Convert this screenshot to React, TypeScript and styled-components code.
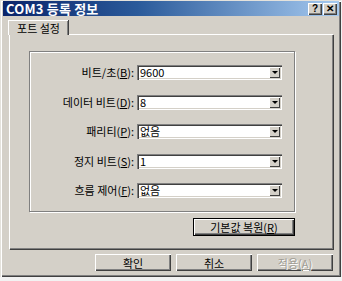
import React, { FC } from "react";
import styled, { createGlobalStyle } from "styled-components";

const GlobalStyle = createGlobalStyle`
  html, body {
    margin: 0;
    padding: 0;
    background: #f2f2f2;
  }
  * {
    box-sizing: border-box;
  }
`;

const FONT = `"Noto Sans CJK KR", "Liberation Sans", sans-serif`;

const Window = styled.div`
  width: 341px;
  height: 277px;
  background: #d4d0c8;
  display: flex;
  flex-direction: column;
  font-family: ${FONT};
  font-size: 11px;
  color: #000;
  box-shadow: inset 1px 1px 0 #e4e2dc, inset 2px 2px 0 #ffffff,
    inset -1px -1px 0 #404040, inset -2px -2px 0 #808080;
`;

const TitleBar = styled.div`
  height: 15px;
  margin: 1px 2px 0 3px;
  padding: 0 2px 0 3px;
  display: flex;
  align-items: center;
  justify-content: space-between;
  background: linear-gradient(90deg, #0a246a 0%, #2a5a9a 40%, #a6caf0 100%);
`;

const Title = styled.span`
  color: #fff;
  font-weight: bold;
  font-size: 13px;
  line-height: 15px;
  letter-spacing: 0.2px;
`;

const TitleButtons = styled.div`
  display: flex;
  gap: 1px;
`;

const CaptionButton = styled.div`
  width: 14px;
  height: 12px;
  background: #d4d0c8;
  display: flex;
  align-items: center;
  justify-content: center;
  font-family: "Liberation Sans", sans-serif;
  font-weight: bold;
  font-size: 10px;
  line-height: 1;
  box-shadow: inset 1px 1px 0 #fff, inset -1px -1px 0 #404040,
    inset -2px -2px 0 #808080;
`;

const Body = styled.div`
  flex: 1;
  display: flex;
  flex-direction: column;
  padding: 4px 8px 0 8px;
`;

const TabStrip = styled.div`
  display: flex;
  height: 14px;
`;

const Tab = styled.div`
  width: 60px;
  height: 15px;
  padding-top: 1px;
  text-align: center;
  line-height: 12px;
  background: #d4d0c8;
  border-top: 1px solid #fff;
  border-left: 1px solid #fff;
  box-shadow: 1px 0 0 #404040, inset -1px 0 0 #808080;
  position: relative;
  z-index: 1;
`;

const Panel = styled.div`
  margin-left: 1px;
  width: 324px;
  height: 215px;
  border-top: 1px solid #fff;
  border-left: 1px solid #fff;
  box-shadow: inset -1px -1px 0 #808080, 1px 1px 0 #404040;
  padding: 16px 0 0 19px;
  display: flex;
  flex-direction: column;
`;

const PanelInner = styled.div`
  width: 266px;
  display: flex;
  flex-direction: column;
`;

const GroupBox = styled.div`
  height: 161px;
  border: 1px solid #808080;
  box-shadow: 1px 1px 0 #fff, inset 1px 1px 0 #fff;
  padding: 13px 0 0 0;
  display: grid;
  grid-template-columns: 104px 145px;
  grid-auto-rows: 15px;
  column-gap: 3px;
  row-gap: 14.5px;
  align-items: center;
`;

const Label = styled.span`
  text-align: right;
  white-space: nowrap;
  line-height: 15px;
`;

const Key = styled.span`
  text-decoration: underline;
`;

const Select = styled.div`
  height: 15px;
  background: #fff;
  display: flex;
  align-items: stretch;
  box-shadow: inset 1px 1px 0 #808080, inset 2px 2px 0 #404040,
    inset -1px -1px 0 #fff, inset -2px -2px 0 #d4d0c8;
  padding: 2px;
`;

const SelectValue = styled.span`
  flex: 1;
  padding-left: 1px;
  line-height: 11px;
  font-size: 11px;
`;

const ArrowButton = styled.div`
  width: 11px;
  background: #d4d0c8;
  display: flex;
  align-items: center;
  justify-content: center;
  box-shadow: inset 1px 1px 0 #fff, inset -1px -1px 0 #404040;
`;

const Arrow = styled.div`
  width: 0;
  height: 0;
  border-left: 3px solid transparent;
  border-right: 3px solid transparent;
  border-top: 3px solid #000;
`;

const Button = styled.div<{ $w: number; $disabled?: boolean; $focus?: boolean }>`
  width: ${(p) => p.$w}px;
  height: ${(p) => (p.$focus ? 18 : 17)}px;
  display: flex;
  align-items: center;
  justify-content: center;
  background: #d4d0c8;
  color: ${(p) => (p.$disabled ? "#a09c94" : "#000")};
  text-shadow: ${(p) => (p.$disabled ? "1px 1px 0 #fff" : "none")};
  box-shadow: ${(p) =>
    p.$focus
      ? "inset 0 0 0 1px #000, inset 2px 2px 0 #fff, inset -2px -2px 0 #404040, inset -3px -3px 0 #808080"
      : "inset 1px 1px 0 #fff, inset -1px -1px 0 #404040, inset -2px -2px 0 #808080"};
  white-space: nowrap;
`;

const RestoreRow = styled.div`
  display: flex;
  justify-content: flex-end;
  margin-top: 6px;
`;

const Footer = styled.div`
  display: flex;
  justify-content: flex-end;
  gap: 5px;
  margin-top: 5px;
`;

interface Field {
  label: string;
  key: string;
  value: string;
}

const fields: Field[] = [
  { label: "비트/초", key: "B", value: "9600" },
  { label: "데이터 비트", key: "D", value: "8" },
  { label: "패리티", key: "P", value: "없음" },
  { label: "정지 비트", key: "S", value: "1" },
  { label: "흐름 제어", key: "F", value: "없음" },
];

const App: FC = () => {
  return (
    <>
      <GlobalStyle />
      <Window>
        <TitleBar>
          <Title>COM3 등록 정보</Title>
          <TitleButtons>
            <CaptionButton>?</CaptionButton>
            <CaptionButton>✕</CaptionButton>
          </TitleButtons>
        </TitleBar>
        <Body>
          <TabStrip>
            <Tab>포트 설정</Tab>
          </TabStrip>
          <Panel>
            <PanelInner>
              <GroupBox>
                {fields.map((f) => (
                  <React.Fragment key={f.key}>
                    <Label>
                      {f.label}(<Key>{f.key}</Key>):
                    </Label>
                    <Select>
                      <SelectValue>{f.value}</SelectValue>
                      <ArrowButton>
                        <Arrow />
                      </ArrowButton>
                    </Select>
                  </React.Fragment>
                ))}
              </GroupBox>
              <RestoreRow>
                <Button $w={102} $focus>
                  기본값 복원(<Key>R</Key>)
                </Button>
              </RestoreRow>
            </PanelInner>
          </Panel>
          <Footer>
            <Button $w={76}>확인</Button>
            <Button $w={76}>취소</Button>
            <Button $w={76} $disabled>
              적용(<Key>A</Key>)
            </Button>
          </Footer>
        </Body>
      </Window>
    </>
  );
};

export default App;
